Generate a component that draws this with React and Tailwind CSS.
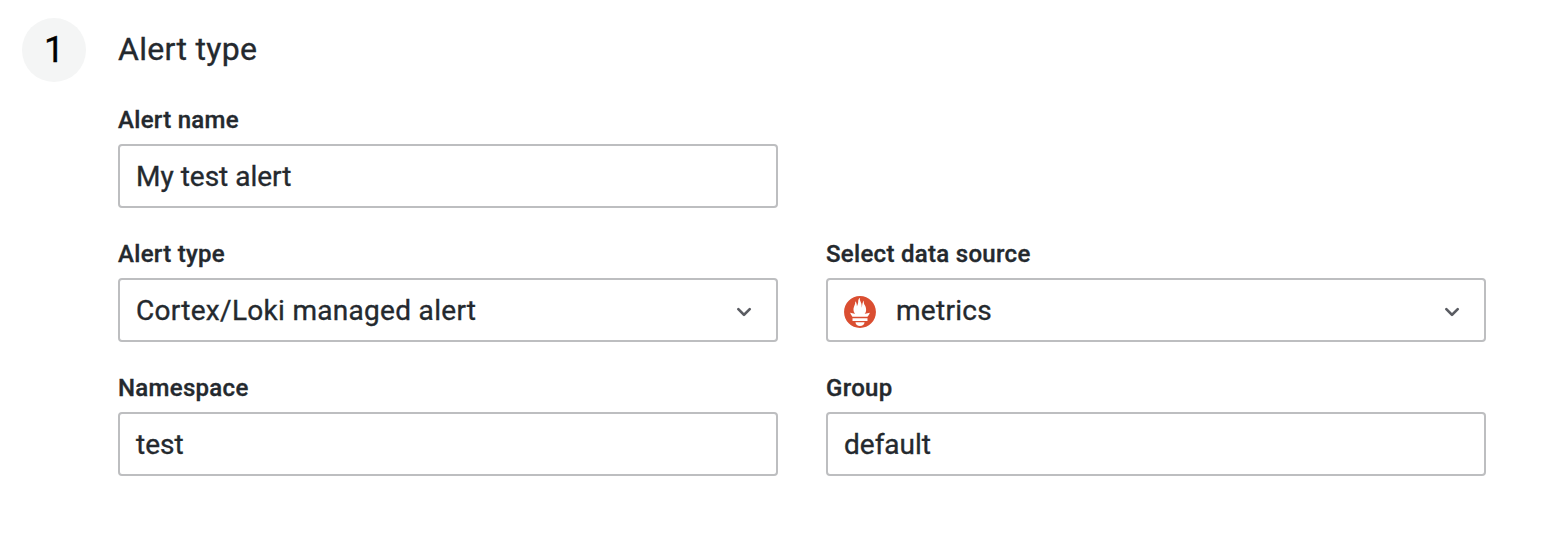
function Chevron() {
  return (
    <svg className="mt-1 mr-4 h-8 w-8 shrink-0" viewBox="0 0 24 24" fill="#5a5c62">
      <path d="M17,9.17a1,1,0,0,0-1.41,0L12,12.71,8.46,9.17a1,1,0,0,0-1.41,0,1,1,0,0,0,0,1.42l4.24,4.24a1,1,0,0,0,1.42,0L17,10.59A1,1,0,0,0,17,9.17Z" />
    </svg>
  );
}

function PrometheusLogo() {
  return (
    <svg className="mt-1 mr-5 h-8 w-8 shrink-0" viewBox="0 0 256 257">
      <path
        fill="#DA4E31"
        d="M128.001.667C57.311.667 0 57.971 0 128.664c0 70.69 57.311 127.998 128.001 127.998S256 199.354 256 128.664C256 57.97 198.689.667 128.001.667zm0 239.56c-20.112 0-36.419-13.435-36.419-30.004h72.838c0 16.566-16.306 30.004-36.419 30.004zm60.153-39.94H67.842V178.47h120.314v21.816h-.002zm-.432-33.045H68.185c-.398-.458-.804-.91-1.188-1.375-12.315-14.954-15.216-22.76-18.032-30.716-.048-.262 14.933 3.06 25.556 5.45 0 0 5.466 1.265 13.458 2.722-7.673-8.994-12.23-20.428-12.23-32.116 0-25.658 19.68-48.079 12.58-66.201 6.91.562 14.3 14.583 14.8 36.505 7.346-10.152 10.42-28.69 10.42-40.056 0-11.769 7.755-25.44 15.512-25.907-6.915 11.396 1.79 21.165 9.53 45.4 2.902 9.103 2.532 24.423 4.772 34.138.744-20.178 4.213-49.62 17.014-59.784-5.647 12.8.836 28.818 5.27 36.518 7.154 12.424 11.49 21.836 11.49 39.638 0 11.936-4.407 23.173-11.84 31.958 8.452-1.586 14.289-3.016 14.289-3.016l27.45-5.355c.002-.002-3.987 16.401-19.314 32.197z"
      />
    </svg>
  );
}

function Field({ label, children }) {
  return (
    <div className="flex w-[660px] flex-col">
      <label className="mb-3 h-6 text-[24px] leading-6 font-medium tracking-[0.3px]">{label}</label>
      <div className="flex h-16 items-center rounded-[4px] border-2 border-[#bdbec0] bg-white pl-4 text-[28px] leading-8">
        {children}
      </div>
    </div>
  );
}

export default function App() {
  return (
    <main className="flex h-[534px] w-[1558px] bg-white pt-[18px] pl-[22px] font-['Roboto',sans-serif] text-[#24292e] [-webkit-text-stroke:0.35px]">
      <div className="flex size-16 items-center justify-center rounded-full bg-[#f4f5f5] text-[36px] text-black">1</div>
      <section className="ml-8">
        <h1 className="h-[90px] pt-[11px] text-[32px] leading-10 tracking-[0.3px]">Alert type</h1>
        <div className="grid grid-cols-[660px_660px] gap-x-12 gap-y-[34px]">
          <div className="col-span-2"><Field label="Alert name"><span className="pt-0.5">My test alert</span></Field></div>
          <Field label="Alert type"><span className="flex-1 pt-0.5 tracking-[0.3px]">Cortex/Loki managed alert</span><Chevron /></Field>
          <Field label="Select data source"><PrometheusLogo /><span className="flex-1 pt-0.5 tracking-[0.3px]">metrics</span><Chevron /></Field>
          <Field label="Namespace"><span className="pt-0.5">test</span></Field>
          <Field label="Group"><span className="pt-0.5">default</span></Field>
        </div>
      </section>
    </main>
  );
}
